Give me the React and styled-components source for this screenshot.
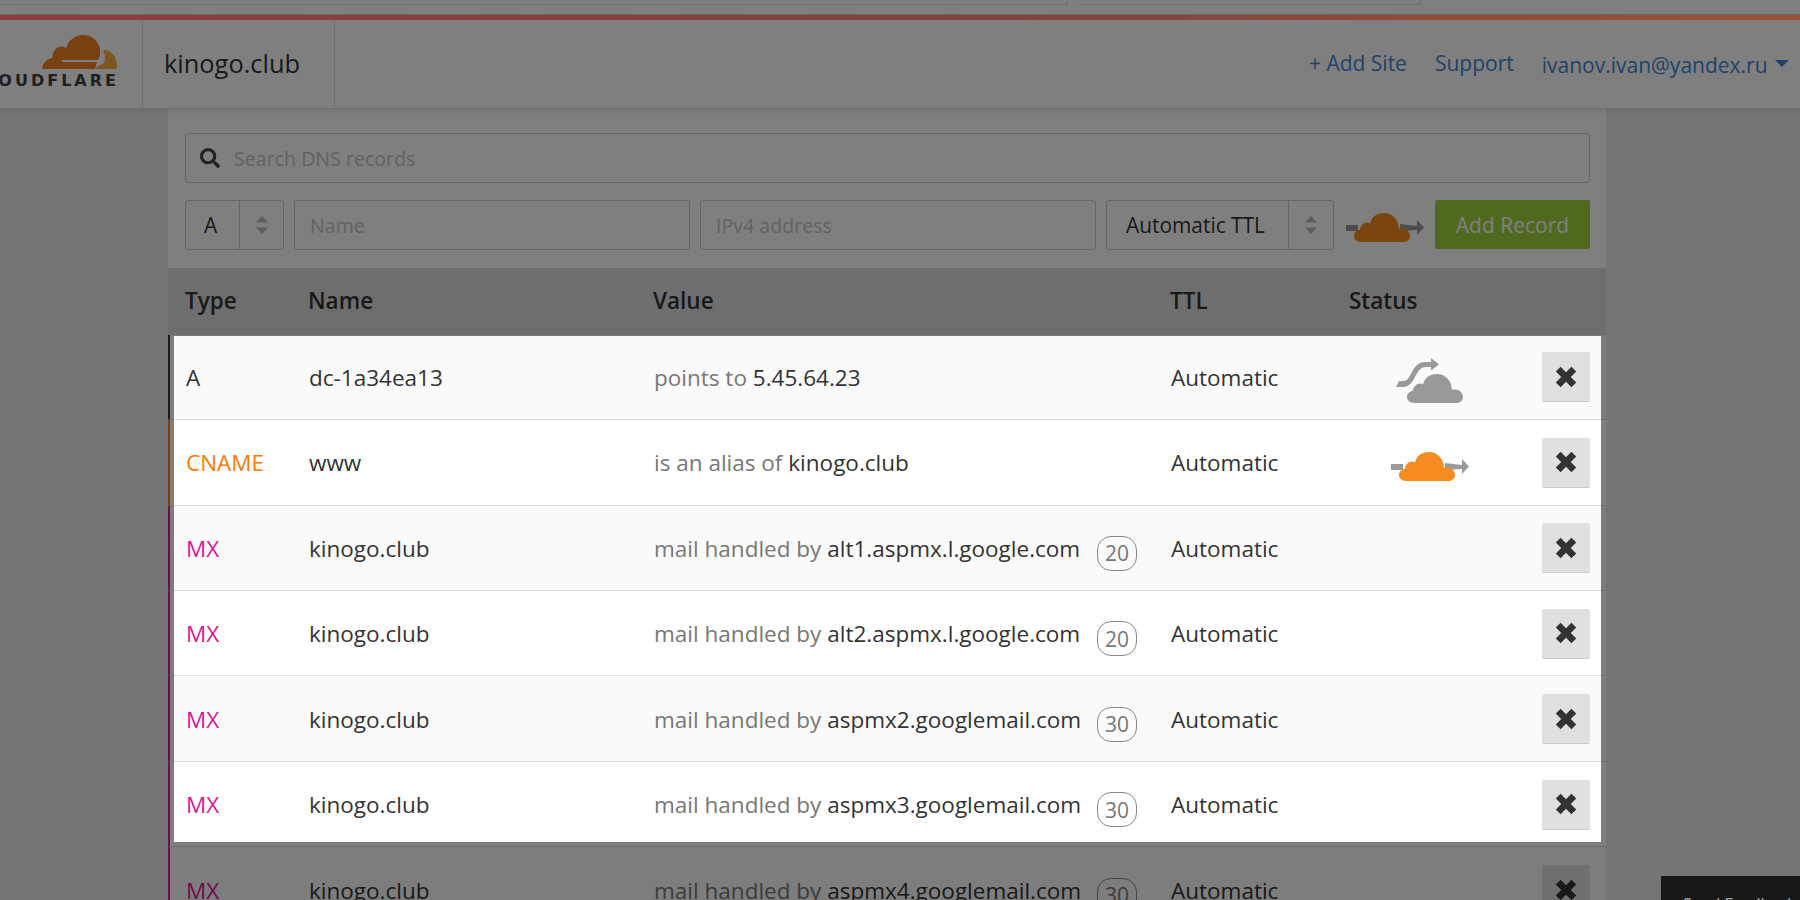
import React from "react";
import styled, { createGlobalStyle } from "styled-components";
import { FaSearch } from "react-icons/fa";

const records = [
  { type: "A", name: "dc-1a34ea13", label: "points to", value: "5.45.64.23", status: "dns" },
  { type: "CNAME", name: "www", label: "is an alias of", value: "kinogo.club", status: "proxy" },
  { type: "MX", name: "kinogo.club", label: "mail handled by", value: "alt1.aspmx.l.google.com", priority: 20 },
  { type: "MX", name: "kinogo.club", label: "mail handled by", value: "alt2.aspmx.l.google.com", priority: 20 },
  { type: "MX", name: "kinogo.club", label: "mail handled by", value: "aspmx2.googlemail.com", priority: 30 },
  { type: "MX", name: "kinogo.club", label: "mail handled by", value: "aspmx3.googlemail.com", priority: 30 },
  { type: "MX", name: "kinogo.club", label: "mail handled by", value: "aspmx4.googlemail.com", priority: 30 },
];

const typeColors = { A: "#333333", CNAME: "#ff7a00", MX: "#e0169a" };

const CLOUD =
  "M7 29C3 29 0 26 0 23C0 19.5 3 17 6 17C6 12.5 10 9 14 9.5C15 9.7 15.5 10 16 10.5C17.5 4 23 0 30 0C38 0 44.5 6 45 16C46 15.5 47 15.5 48 15.5C52.5 15.5 56 19 56 23C56 26.5 53 29 50 29Z";

function ProxyIcon() {
  return (
    <svg width="78" height="29" viewBox="0 0 78 29">
      <path d="M0 12H12V18H0Z" fill="#9a9a9a" />
      <path d="M54 11L71 13V7L78 14.5L71 22V17L54 18Z" fill="#9a9a9a" />
      <path transform="translate(8 0)" d={CLOUD} fill="#f68b1f" />
    </svg>
  );
}

function DnsIcon() {
  return (
    <svg width="68" height="45" viewBox="0 0 68 45">
      <path d="M0 29L3 23H7C12 23 13 19 16 14C19 8 23 4 29 4H35V0L43 6.5L35 12.5V9H30C25 9 23 12 20 17C17 23 14 29 7 29Z" fill="#999999" />
      <path transform="translate(11 16)" d={CLOUD} fill="#999999" />
    </svg>
  );
}

function CloseIcon() {
  return (
    <svg width="24" height="24" viewBox="0 0 20 20">
      <path d="M1.5 5.5L5.5 1.5L10 6L14.5 1.5L18.5 5.5L14 10L18.5 14.500L14.500 18.500L10 14L5.500 18.500L1.500 14.500L6 10Z" fill="#333333" />
    </svg>
  );
}

function Stepper() {
  return (
    <svg width="12" height="18" viewBox="0 0 12 18">
      <path d="M6 0L12 6.5H0Z" fill="#bbbbbb" />
      <path d="M0 11.5H12L6 18Z" fill="#bbbbbb" />
    </svg>
  );
}

function App() {
  return (
    <>
      <GlobalStyle />
      <BrowserStrip>
        <StripBox $width={1067} />
        <StripBox $width={341} />
      </BrowserStrip>
      <ColorBar />
      <Nav>
        <LogoCell>
          <svg width="75" height="34" viewBox="0 0 75 34">
            <path d="M0 34C.5 28 5 23.5 10.500 23C10 16 15 11 20 11.500C22 11.700 23 12.500 24 13C27 5 33 0 41 0C50 0 56.500 6 58 14C58.500 18 58 22 56 25H20.500C19.500 25 19.500 27 20.500 27H55C54 30 53.500 32 53 34Z" fill="#f38020" />
            <path d="M62 15C69 15 75 21 75 32C75 33 74.500 34 74 34H53.500C54.500 32 56 31 58 30C61 29.500 63 27 63 24C63 21 62.500 18 61 15.200Z" fill="#fbad41" />
          </svg>
          <LogoText>CLOUDFLARE</LogoText>
        </LogoCell>
        <SiteCell>kinogo.club</SiteCell>
        <NavLinks>
          <NavLink>+ Add Site</NavLink>
          <NavLink>Support</NavLink>
          <NavLink $drop>
            ivanov.ivan@yandex.ru <Caret />
          </NavLink>
        </NavLinks>
      </Nav>
      <Main>
        <FormArea>
          <SearchBox>
            <FaSearch size={20} color="#444444" />
            <Placeholder>Search DNS records</Placeholder>
          </SearchBox>
          <FormRow>
            <SelectBox $width={99} $split={53}>
              <SelectValue>A</SelectValue>
              <SelectArrows><Stepper /></SelectArrows>
            </SelectBox>
            <Input $width={396}><Placeholder>Name</Placeholder></Input>
            <Input $width={396}><Placeholder>IPv4 address</Placeholder></Input>
            <SelectBox $width={228} $split={181}>
              <SelectValue>Automatic TTL</SelectValue>
              <SelectArrows><Stepper /></SelectArrows>
            </SelectBox>
            <FormIcon><ProxyIcon /></FormIcon>
            <AddButton>Add Record</AddButton>
          </FormRow>
        </FormArea>
        <HeaderRow>
          <HeaderCell>Type</HeaderCell>
          <HeaderCell>Name</HeaderCell>
          <HeaderCell>Value</HeaderCell>
          <HeaderCell>TTL</HeaderCell>
          <HeaderCell>Status</HeaderCell>
        </HeaderRow>
        {records.map((record, index) => (
          <Row key={index} $odd={index % 2 === 0} $color={typeColors[record.type]}>
            <TypeCell $color={typeColors[record.type]}>{record.type}</TypeCell>
            <Cell>{record.name}</Cell>
            <ValueCell>
              <span>
                <Muted>{record.label}</Muted> {record.value}
              </span>
              {record.priority && <Priority>{record.priority}</Priority>}
            </ValueCell>
            <Cell>Automatic</Cell>
            <StatusCell>
              {record.status === "dns" && <DnsIcon />}
              {record.status === "proxy" && <ProxyIcon />}
            </StatusCell>
            <DeleteButton><CloseIcon /></DeleteButton>
          </Row>
        ))}
      </Main>
      <Spotlight />
      <Feedback>Send Feedback</Feedback>
    </>
  );
}

export default App;

const GlobalStyle = createGlobalStyle`
  html, body {
    margin: 0;
    height: 900px;
    overflow: hidden;
    background: #eaeaea;
    font-family: "Open Sans", sans-serif;
    color: #333333;
  }
`;

const BrowserStrip = styled.div`
  height: 14px;
  background: #ffffff;
  border-bottom: 1px solid #cccccc;
  display: flex;
  gap: 11px;
`;

const StripBox = styled.div`
  height: 4px;
  width: ${({ $width }) => $width}px;
  border-bottom: 1px solid #dedede;
  border-right: 1px solid #dedede;
`;

/* sits above the dimming layer in the reference */
const ColorBar = styled.div`
  height: 5px;
  position: relative;
  z-index: 1;
  background: linear-gradient(90deg, #8f3b40, #80443a 55%, #9c5238);
`;

const Nav = styled.header`
  height: 88px;
  display: flex;
  background: #ffffff;
  border-bottom: 1px solid #dddddd;
  box-shadow: 0 1px 8px rgba(0, 0, 0, 0.12);
  position: relative;
`;

const LogoCell = styled.div`
  width: 143px;
  border-right: 1px solid #dddddd;
  overflow: hidden;
  display: flex;
  flex-direction: column;
  align-items: flex-end;
  padding: 15px 25px 0 0;
  box-sizing: border-box;
  flex-shrink: 0;
`;

const LogoText = styled.div`
  font-family: "DejaVu Sans", sans-serif;
  font-weight: 700;
  font-size: 16px;
  letter-spacing: 3px;
  line-height: 18px;
  margin-top: 3px;
  margin-right: -2px;
  white-space: nowrap;
  color: #404041;
`;

const SiteCell = styled.div`
  width: 192px;
  border-right: 1px solid #dddddd;
  font-size: 25.4px;
  display: flex;
  align-items: center;
  padding: 0 0 2px 21px;
  box-sizing: border-box;
`;

const NavLinks = styled.nav`
  margin-left: auto;
  display: flex;
  align-items: center;
  gap: 28px;
  padding: 0 11px 2px 0;
`;

const NavLink = styled.a`
  font-size: 21px;
  color: #3f86d0;
  white-space: nowrap;
  margin-top: ${({ $drop }) => ($drop ? "4px" : "0")};
`;

const Caret = styled.span`
  display: inline-block;
  width: 0;
  height: 0;
  margin-left: 2px;
  vertical-align: 6px;
  border-left: 7px solid transparent;
  border-right: 7px solid transparent;
  border-top: 7px solid #3f86d0;
`;

const Main = styled.main`
  width: 1438px;
  margin-left: 168px;
`;

const FormArea = styled.section`
  background: #ffffff;
  height: 159px;
  padding: 24px 16px 0 17px;
  box-sizing: border-box;
`;

const SearchBox = styled.div`
  height: 50px;
  border: 1px solid #cccccc;
  border-radius: 3px;
  display: flex;
  align-items: center;
  gap: 14px;
  padding-left: 14px;
  box-sizing: border-box;
`;

const Placeholder = styled.span`
  font-size: 19.6px;
  color: #c4c4c4;
`;

const FormRow = styled.div`
  display: flex;
  align-items: flex-start;
  margin-top: 17px;
  gap: 10px;
`;

const SelectBox = styled.div`
  width: ${({ $width }) => $width}px;
  height: 50px;
  border: 1px solid #cccccc;
  border-radius: 3px;
  display: grid;
  grid-template-columns: ${({ $split }) => $split}px 1fr;
  box-sizing: border-box;
  flex-shrink: 0;
`;

const SelectValue = styled.div`
  font-size: 20.9px;
  display: flex;
  align-items: center;
  justify-content: center;
  padding-right: 4px;
`;

const SelectArrows = styled.div`
  border-left: 1px solid #cccccc;
  display: flex;
  align-items: center;
  justify-content: center;
`;

const Input = styled.div`
  width: ${({ $width }) => $width}px;
  height: 50px;
  border: 1px solid #cccccc;
  border-radius: 3px;
  display: flex;
  align-items: center;
  padding-left: 15px;
  box-sizing: border-box;
  flex-shrink: 0;
`;

const FormIcon = styled.div`
  width: 78px;
  margin: 13px 1px 0 2px;
  flex-shrink: 0;
`;

const AddButton = styled.div`
  width: 155px;
  height: 49px;
  background: #a2d33f;
  border-radius: 2px;
  color: #ffffff;
  font-size: 21px;
  display: flex;
  align-items: center;
  justify-content: center;
  flex-shrink: 0;
`;

const tableColumns = "123px 345px 517px 179px 192px 48px";

const HeaderRow = styled.div`
  height: 66.7px;
  box-sizing: border-box;
  background: #dcdcdc;
  display: grid;
  grid-template-columns: ${tableColumns};
  align-items: center;
  padding: 0 16px 2px 17px;
`;

const HeaderCell = styled.div`
  font-size: 22.5px;
  font-weight: 600;
`;

const Row = styled.div`
  height: 85.45px;
  box-sizing: border-box;
  display: grid;
  grid-template-columns: ${tableColumns};
  align-items: center;
  padding: 1px 16px 0;
  background: ${({ $odd }) => ($odd ? "#fafafa" : "#ffffff")};
  border-left: 2px solid ${({ $color }) => $color};
  border-bottom: 1px solid #dddddd;
`;

const Cell = styled.div`
  font-size: 22.5px;
  white-space: nowrap;
`;

const TypeCell = styled(Cell)`
  color: ${({ $color }) => $color};
`;

const ValueCell = styled(Cell)`
  display: flex;
  align-items: center;
  justify-content: space-between;
  padding-right: 34px;
`;

const Muted = styled.span`
  color: #777777;
`;

const Priority = styled.span`
  width: 40px;
  height: 35px;
  box-sizing: border-box;
  border: 1px solid #888888;
  border-radius: 14px;
  color: #777777;
  font-size: 21px;
  display: flex;
  align-items: center;
  justify-content: center;
  margin: 5px 0 -5px;
`;

const StatusCell = styled.div`
  display: flex;
  justify-content: center;
  padding: 7px 32px 0 0;
`;

const DeleteButton = styled.div`
  width: 48px;
  height: 50px;
  background: #e0e0e0;
  border-bottom: 1px solid #cccccc;
  border-radius: 2px;
  box-sizing: border-box;
  display: flex;
  align-items: center;
  justify-content: center;
`;

/* the dimmed page: only the hole stays at full brightness */
const Spotlight = styled.div`
  position: fixed;
  left: 174px;
  top: 336px;
  width: 1427px;
  height: 506px;
  box-shadow: 0 0 0 2000px rgba(0, 0, 0, 0.5);
  pointer-events: none;
`;

const Feedback = styled.div`
  position: fixed;
  left: 1661px;
  top: 876px;
  width: 139px;
  height: 40px;
  padding: 17px 0 0 22px;
  box-sizing: border-box;
  background: #181818;
  color: #aaaaaa;
  font-size: 16px;
  white-space: nowrap;
  overflow: hidden;
`;
